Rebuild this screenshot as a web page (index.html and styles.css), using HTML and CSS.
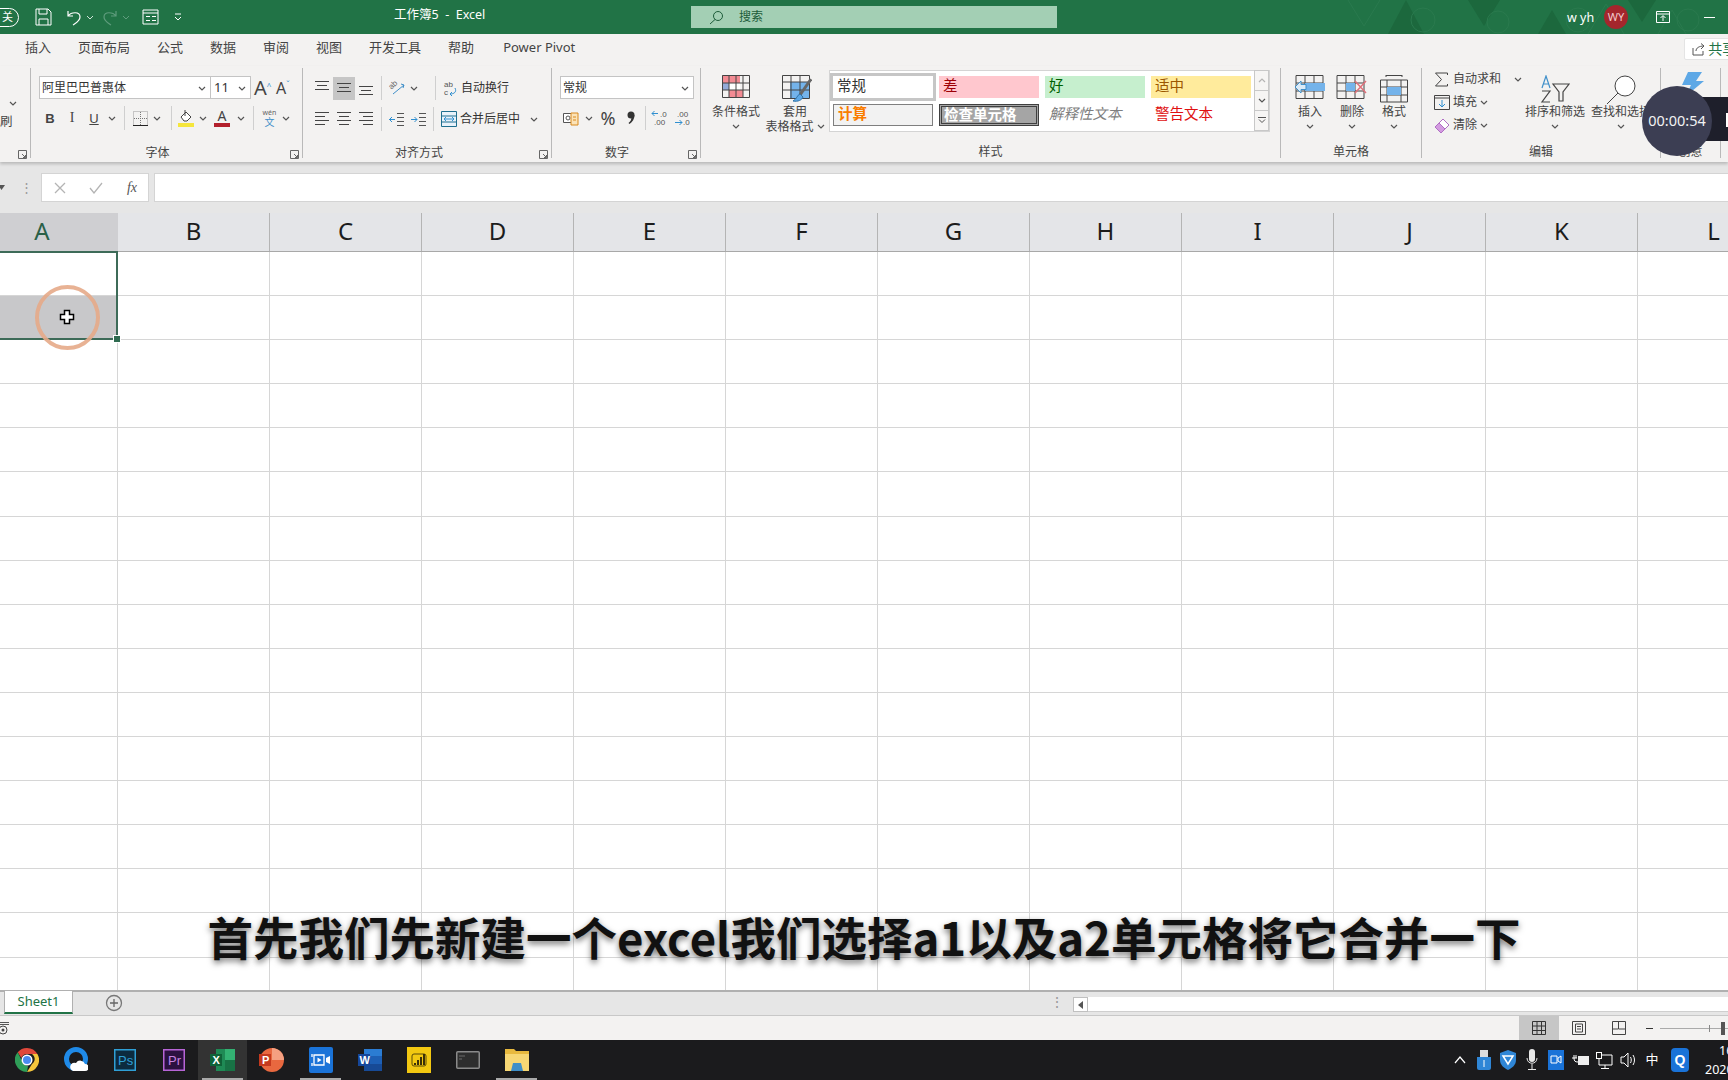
FILE: index.html
```html
<!DOCTYPE html>
<html lang="zh-CN">
<head>
<meta charset="utf-8">
<title>工作簿5 - Excel</title>
<link rel="stylesheet" href="styles.css">
</head>
<body>
<svg class="defs" width="0" height="0">
  <symbol id="chev" viewBox="0 0 8 5"><path d="M1 1l3 3 3-3" fill="none" stroke="#555" stroke-width="1.2"/></symbol>
  <symbol id="launch" viewBox="0 0 9 9"><path d="M.5 8.500V.5h8v8z M4 4l3.500 3.500M7.500 5v2.500H5" fill="none" stroke="#666"/></symbol>
  <symbol id="alt" viewBox="0 0 16 16"><path d="M1 1.500h14M3 5.500h10M1 9.500h14" stroke="#444" fill="none"/></symbol>
  <symbol id="alc" viewBox="0 0 16 16"><path d="M1 3.500h14M3 7.500h10M1 11.500h14" stroke="#444" fill="none"/></symbol>
  <symbol id="alb" viewBox="0 0 16 16"><path d="M1 6.500h14M3 10.500h10M1 14.500h14" stroke="#444" fill="none"/></symbol>
  <symbol id="left" viewBox="0 0 16 16"><path d="M1 1.500h14M1 5.500h10M1 9.500h14M1 13.500h10" stroke="#444" fill="none"/></symbol>
  <symbol id="center" viewBox="0 0 16 16"><path d="M1 1.500h14M3 5.500h10M1 9.500h14M3 13.500h10" stroke="#444" fill="none"/></symbol>
  <symbol id="right" viewBox="0 0 16 16"><path d="M1 1.500h14M5 5.500h10M1 9.500h14M5 13.500h10" stroke="#444" fill="none"/></symbol>
</svg>

<header class="titlebar">
  <svg class="pattern" width="440" height="34" viewBox="0 0 440 34">
    <g fill="#1c683d"><path d="M100 34l18-34 18 34z"/><path d="M180 0l16 26 16-26z"/><path d="M250 34l14-24 14 24z"/><path d="M340 0l14 22 14-22z"/></g>
    <g fill="none" stroke="#2a7a4e"><circle cx="135" cy="20" r="12"/><circle cx="210" cy="22" r="11"/><circle cx="290" cy="20" r="12"/><circle cx="400" cy="20" r="11"/><path d="M60 0l16 26 16-26M300 34l18-30 18 30M370 34l14-24 14 24"/></g>
  </svg>
  <div class="qat">
    <span class="autosave">关</span>
    <svg width="17" height="18" viewBox="0 0 17 18"><path d="M1 1h12l3 3v13H1zM4 1v5h8V1M4 17v-6h9v6" fill="none" stroke="#fff"/></svg>
    <svg class="q-undo" width="16" height="18" viewBox="0 0 16 18"><path d="M2 3v5h5M2 8c3-4 12-5 12 1 0 4-4 6-7 8" fill="none" stroke="#fff" stroke-width="1.2"/></svg>
    <svg class="q-ch" width="8" height="5"><path d="M1 1l3 3 3-3" fill="none" stroke="#cfe3d8"/></svg>
    <svg class="q-redo" width="16" height="18" viewBox="0 0 16 18"><path d="M14 3v5H9M14 8C11 4 2 3 2 9c0 4 4 6 7 8" fill="none" stroke="#5f9c7d" stroke-width="1.2"/></svg>
    <svg class="q-ch" width="8" height="5"><path d="M1 1l3 3 3-3" fill="none" stroke="#5f9c7d"/></svg>
    <svg class="q-form" width="17" height="16" viewBox="0 0 17 16"><path d="M1 1h15v14H1zM1 4h15M4 7.500h4M10 7.500h4M4 11.500h4M10 11.500h4" fill="none" stroke="#fff"/></svg>
    <svg class="q-custom" width="8" height="8" viewBox="0 0 8 8"><path d="M1 1h6M1 4l3 3 3-3" fill="none" stroke="#fff"/></svg>
  </div>
  <div class="doc-title">工作簿5&nbsp; -&nbsp; Excel</div>
  <div class="search">
    <svg width="15" height="15" viewBox="0 0 15 15"><circle cx="9" cy="6" r="4.500" fill="none" stroke="#1d5c3a"/><path d="M6 9.500L1 14" stroke="#1d5c3a"/></svg>
    <span>搜索</span>
  </div>
  <div class="account">w yh</div>
  <div class="avatar">WY</div>
  <svg class="win-opt" width="14" height="12" viewBox="0 0 14 12"><path d="M.5.500h13v11H.5zM.5 3h13M7 10V5M4.500 7L7 4.500 9.500 7" fill="none" stroke="#fff"/></svg>
  <div class="win-min"></div>
</header>

<nav class="tabs">
  <span class="tab">插入</span>
  <span class="tab">页面布局</span>
  <span class="tab">公式</span>
  <span class="tab">数据</span>
  <span class="tab">审阅</span>
  <span class="tab">视图</span>
  <span class="tab">开发工具</span>
  <span class="tab">帮助</span>
  <span class="tab tab-pivot">Power Pivot</span>
  <span class="share">
    <svg width="13" height="13" viewBox="0 0 13 13"><path d="M1 5v7h10V8M4 8c0-3 3-5 8-5M9 .5L12 3 9 6" fill="none" stroke="#555"/></svg>
    <b>共享</b>
  </span>
</nav>

<section class="ribbon">
  <div class="group g-clip">
    <div class="g-body">
      <svg class="clip-ch" width="8" height="5"><use href="#chev"/></svg>
      <span class="clip-txt">刷</span>
    </div>
    <div class="g-label"><i></i><span></span><svg width="9" height="9"><use href="#launch"/></svg></div>
  </div>

  <div class="group g-font">
    <div class="g-body">
      <div class="font-row1">
        <div class="combo combo-name"><span>阿里巴巴普惠体</span><svg width="8" height="5"><use href="#chev"/></svg></div>
        <div class="combo combo-size"><span>11</span><svg width="8" height="5"><use href="#chev"/></svg></div>
        <span class="grow">A<sup>^</sup></span>
        <span class="shrink">A<sup>ˇ</sup></span>
      </div>
      <div class="font-row2">
        <b class="tb tb-b">B</b>
        <em class="tb tb-i">I</em>
        <u class="tb tb-u">U</u>
        <svg width="8" height="5"><use href="#chev"/></svg>
        <i class="sep"></i>
        <svg width="15" height="15" viewBox="0 0 15 15"><path d="M.5.500h14v14H.5z" fill="none" stroke="#999" stroke-dasharray="1 1"/><path d="M7.500 1v13M1 7.500h13" stroke="#777" stroke-dasharray="1 1"/><path d="M0 14.500h15" stroke="#222"/></svg>
        <svg width="8" height="5"><use href="#chev"/></svg>
        <i class="sep"></i>
        <svg class="fill-ic" width="16" height="18" viewBox="0 0 16 18"><path d="M3 8l5-5 5 5-4 4H6z" fill="#fff" stroke="#444"/><path d="M7 1v6" stroke="#444"/><path d="M0 14h16v4H0z" fill="#f5e63c"/></svg>
        <svg width="8" height="5"><use href="#chev"/></svg>
        <span class="fcolor">A</span>
        <svg width="8" height="5"><use href="#chev"/></svg>
        <i class="sep"></i>
        <span class="wen"><small>wén</small><span>文</span></span>
        <svg width="8" height="5"><use href="#chev"/></svg>
      </div>
    </div>
    <div class="g-label"><i></i><span>字体</span><svg width="9" height="9"><use href="#launch"/></svg></div>
  </div>

  <div class="group g-align">
    <div class="g-body">
      <div class="align-row1">
        <svg width="16" height="16"><use href="#alt"/></svg>
        <span class="hl"><svg width="16" height="16"><use href="#alc"/></svg></span>
        <svg width="16" height="16"><use href="#alb"/></svg>
        <i class="sep"></i>
        <svg width="18" height="18" viewBox="0 0 18 18"><text x="2" y="9" transform="rotate(-45 5 8)" class="svg-t orient">ab</text><path d="M5 15L16 6M13 5l3 1-1 3" stroke="#3f8fc9" fill="none"/></svg>
        <svg width="8" height="5"><use href="#chev"/></svg>
        <i></i>
        <i class="sep"></i>
        <span class="cmd"><svg width="15" height="18" viewBox="0 0 15 18"><text x="1" y="8" class="svg-t wrapt">ab</text><text x="1" y="16" class="svg-t wrapt">c</text><path d="M12 9c2 4-1 6-5 6M9 13l-2 2 2 2" fill="none" stroke="#2f8fd0"/></svg><span>自动换行</span></span>
      </div>
      <div class="align-row2">
        <svg width="16" height="16"><use href="#left"/></svg>
        <svg width="16" height="16"><use href="#center"/></svg>
        <svg width="16" height="16"><use href="#right"/></svg>
        <i class="sep"></i>
        <svg width="15" height="15" viewBox="0 0 15 15"><path d="M8 1.500h7M8 5.500h7M8 9.500h7M8 13.500h7" stroke="#555"/><path d="M6 7.500H0M3 5L.5 7.500 3 10" fill="none" stroke="#2f8fd0"/></svg>
        <svg width="15" height="15" viewBox="0 0 15 15"><path d="M8 1.500h7M8 5.500h7M8 9.500h7M8 13.500h7" stroke="#555"/><path d="M0 7.500h6M3.500 5L6 7.500 3.500 10" fill="none" stroke="#2f8fd0"/></svg>
        <i class="sep"></i>
        <span class="cmd"><svg width="16" height="16" viewBox="0 0 16 16"><path d="M.5.500h15v15H.5z" fill="#e8f2fa" stroke="#1f6f8f"/><path d="M.5 5h15M.5 11h15" stroke="#1f6f8f"/><path d="M3 8h10M5 6L3 8l2 2M11 6l2 2-2 2" fill="none" stroke="#2f8fd0"/></svg><span>合并后居中</span><svg class="cmd-ch" width="8" height="5"><use href="#chev"/></svg></span>
      </div>
    </div>
    <div class="g-label"><i></i><span>对齐方式</span><svg width="9" height="9"><use href="#launch"/></svg></div>
  </div>

  <div class="group g-num">
    <div class="g-body">
      <div class="combo combo-num"><span>常规</span><svg width="8" height="5"><use href="#chev"/></svg></div>
      <div class="num-row2">
        <svg width="17" height="15" viewBox="0 0 17 15"><path d="M.5 2.500h12v9H.5z" fill="#fff" stroke="#555"/><circle cx="5" cy="7" r="2" fill="none" stroke="#555"/><path d="M8 2h7v12H8z" fill="#fbe3b8" stroke="#d98a1f"/><path d="M10 6h3M10 9h3" stroke="#d98a1f"/></svg>
        <svg width="8" height="5"><use href="#chev"/></svg>
        <span class="pct">%</span>
        <svg width="8" height="14" viewBox="0 0 8 14"><circle cx="4" cy="4" r="3.500" fill="#333"/><path d="M7.500 4c0 4-2 7-5 9l-1-1c2-1.500 3-3.500 3-6z" fill="#333"/></svg>
        <i class="sep"></i>
        <svg width="18" height="18" viewBox="0 0 18 18"><path d="M7 4.500H1M3.500 2L1 4.500 3.500 7" fill="none" stroke="#2f8fd0"/><text x="9" y="7.500" class="svg-t dect">.0</text><text x="3" y="16" class="svg-t dect">.00</text></svg>
        <svg width="18" height="18" viewBox="0 0 18 18"><text x="3" y="7.500" class="svg-t dect">.00</text><path d="M1 13.500h7M5.500 11L8 13.500 5.500 16" fill="none" stroke="#2f8fd0"/><text x="9" y="16" class="svg-t dect">.0</text></svg>
      </div>
    </div>
    <div class="g-label"><i></i><span>数字</span><svg width="9" height="9"><use href="#launch"/></svg></div>
  </div>

  <div class="group g-style">
    <div class="g-body style-body">
      <div class="big big-cond">
        <span class="big-ico"><svg width="28" height="23" viewBox="0 0 28 23"><path d="M0 0h18v8H0z" fill="#f28b93"/><path d="M7 8h11v7H7z" fill="#fff"/><path d="M7 8H0v7h7z" fill="#93aad8"/><path d="M7 15h14v8H7z" fill="#f28b93"/><path d="M.5.500h27v22H.5zM.5 8h27M.5 15h27M7 0v23M14 0v23M21 0v23" fill="none" stroke="#444"/></svg></span>
        <span>条件格式</span>
        <svg class="big-ch" width="8" height="5"><use href="#chev"/></svg>
      </div>
      <div class="big big-table">
        <span class="big-ico"><svg width="30" height="28" viewBox="0 0 30 28"><path d="M8 7h19v16H8z" fill="#74b3ea"/><path d="M.5.500h27v23H.5zM.5 7h27M.5 15h27M9 0v24M18 0v24" fill="none" stroke="#444"/><path d="M29 4L18 20" stroke="#666" stroke-width="3"/><path d="M18 19c-3 1-3 5-7 7 5 1 9-1 10-4z" fill="#5da8e6" stroke="#2f73a8"/></svg></span>
        <span>套用</span>
        <span class="line2">表格格式<svg width="8" height="5"><use href="#chev"/></svg></span>
      </div>
      <div class="gallery">
        <div class="g-cells">
          <span class="st st-normal">常规</span>
          <span class="st st-bad">差</span>
          <span class="st st-good">好</span>
          <span class="st st-neutral">适中</span>
          <span class="st st-calc">计算</span>
          <span class="st st-check">检查单元格</span>
          <span class="st st-note">解释性文本</span>
          <span class="st st-warn">警告文本</span>
        </div>
        <div class="g-scroll">
          <span><svg width="8" height="5" class="up"><use href="#chev"/></svg></span>
          <span><svg width="8" height="5"><use href="#chev"/></svg></span>
          <span><svg width="8" height="7" viewBox="0 0 8 7"><path d="M0 .5h8M1 2.500l3 3 3-3" fill="none" stroke="#555"/></svg></span>
        </div>
      </div>
    </div>
    <div class="g-label"><i></i><span>样式</span><i></i></div>
  </div>

  <div class="group g-cell">
    <div class="g-body style-body">
      <div class="big big-42">
        <span class="big-ico"><svg width="32" height="24" viewBox="0 0 32 24"><path d="M2 .5h27v23H2zM2 8h27M2 16h27M11 0v24M20 0v24" fill="none" stroke="#444"/><path d="M11 8h20v8H11z" fill="#74b3ea"/><path d="M12 9.500H7V6l-6 6 6 6v-3.500h5z" fill="#dcebf7" stroke="#3f8fc9"/></svg></span>
        <span>插入</span>
        <svg class="big-ch" width="8" height="5"><use href="#chev"/></svg>
      </div>
      <div class="big big-42">
        <span class="big-ico"><svg width="32" height="24" viewBox="0 0 32 24"><path d="M1 .5h27v23H1zM1 8h27M1 16h27M10 0v24M19 0v24" fill="none" stroke="#444"/><path d="M10 8h9v8h-9z" fill="#74b3ea"/><path d="M19 6l11 12M30 6L19 18" stroke="#e0707a" stroke-width="1.500"/></svg></span>
        <span>删除</span>
        <svg class="big-ch" width="8" height="5"><use href="#chev"/></svg>
      </div>
      <div class="big big-42">
        <span class="big-ico"><svg width="28" height="28" viewBox="0 0 28 28"><path d="M6 .5h16M6 0v2M22 0v2" stroke="#444" fill="none"/><path d="M.5 5h27v22H.5zM.5 12h27M.5 20h27M7 5v22M21 5v22" fill="none" stroke="#444"/><path d="M7 12h14v8H7z" fill="#74b3ea"/></svg></span>
        <span>格式</span>
        <svg class="big-ch" width="8" height="5"><use href="#chev"/></svg>
      </div>
    </div>
    <div class="g-label"><i></i><span>单元格</span><i></i></div>
  </div>

  <div class="group g-edit">
    <div class="g-body style-body">
      <div class="edit-stack">
        <div class="edit-row"><svg width="15" height="15" viewBox="0 0 15 15"><path d="M13 3V1H1l6 6.500L1 14h12v-2" fill="none" stroke="#444"/></svg><span>自动求和</span><svg class="ch-far" width="8" height="5"><use href="#chev"/></svg></div>
        <div class="edit-row"><svg width="16" height="15" viewBox="0 0 16 15"><path d="M.5.500h15v14H.5zM.5 3h15" fill="none" stroke="#444"/><path d="M8 5v7M5 9l3 3 3-3" fill="none" stroke="#2f8fd0"/></svg><span>填充</span><svg width="8" height="5"><use href="#chev"/></svg></div>
        <div class="edit-row"><svg width="16" height="16" viewBox="0 0 16 16"><path d="M9 1l6 6-8 8-6-6z" fill="#fff" stroke="#b06fc4"/><path d="M5 5l6 6-4 4-6-6z" fill="#d39be0" stroke="#b06fc4"/></svg><span>清除</span><svg width="8" height="5"><use href="#chev"/></svg></div>
      </div>
      <div class="big big-66">
        <span class="big-ico"><svg width="30" height="28" viewBox="0 0 30 28"><path d="M2 13l4-12 4 12M3.500 9h5" fill="none" stroke="#3f8fc9" stroke-width="1.200"/><path d="M2 16h8L2 27h8" fill="none" stroke="#444" stroke-width="1.200"/><path d="M13 9h16l-6 8v9h-4v-9z" fill="none" stroke="#444" stroke-width="1.200"/></svg></span>
        <span>排序和筛选</span>
        <svg class="big-ch" width="8" height="5"><use href="#chev"/></svg>
      </div>
      <div class="big big-66">
        <span class="big-ico"><svg width="30" height="30" viewBox="0 0 30 30"><circle cx="19" cy="11" r="10" fill="#fff" stroke="#444"/><path d="M12 18L1 29" stroke="#444"/></svg></span>
        <span>查找和选择</span>
        <svg class="big-ch" width="8" height="5"><use href="#chev"/></svg>
      </div>
    </div>
    <div class="g-label"><i></i><span>编辑</span><i></i></div>
  </div>

  <div class="group g-idea">
    <div class="g-body">
      <svg class="idea" width="24" height="24" viewBox="0 0 24 24"><path d="M8 0h14l-6 9h8L6 24l5-11H2z" fill="#5da8e6"/></svg>
    </div>
    <div class="g-label"><i></i><span>创意</span><i></i></div>
  </div>
</section>

<section class="formula">
  <svg class="name-ch" width="8" height="5"><path d="M0 0h7L3.500 5z" fill="#555"/></svg>
  <span class="grip">⋮</span>
  <div class="fx-box">
    <svg width="12" height="12" viewBox="0 0 12 12"><path d="M1 1l10 10M11 1L1 11" stroke="#b4b4b4" stroke-width="1.300"/></svg>
    <svg width="14" height="12" viewBox="0 0 14 12"><path d="M1 6l4 5 8-10" fill="none" stroke="#b4b4b4" stroke-width="1.300"/></svg>
    <em>fx</em>
  </div>
  <div class="fx-input"></div>
</section>

<main class="sheet">
  <div class="col-head">
    <span class="ch-sel">A</span><span>B</span><span>C</span><span>D</span><span>E</span><span>F</span><span>G</span><span>H</span><span>I</span><span>J</span><span>K</span><span>L</span>
  </div>
  <div class="cells">
    <div class="r"><i></i><i></i><i></i><i></i><i></i><i></i><i></i><i></i><i></i><i></i><i></i><i></i></div>
    <div class="r"><i class="a2"></i><i></i><i></i><i></i><i></i><i></i><i></i><i></i><i></i><i></i><i></i><i></i></div>
    <div class="r"><i></i><i></i><i></i><i></i><i></i><i></i><i></i><i></i><i></i><i></i><i></i><i></i></div>
    <div class="r"><i></i><i></i><i></i><i></i><i></i><i></i><i></i><i></i><i></i><i></i><i></i><i></i></div>
    <div class="r"><i></i><i></i><i></i><i></i><i></i><i></i><i></i><i></i><i></i><i></i><i></i><i></i></div>
    <div class="r"><i></i><i></i><i></i><i></i><i></i><i></i><i></i><i></i><i></i><i></i><i></i><i></i></div>
    <div class="r"><i></i><i></i><i></i><i></i><i></i><i></i><i></i><i></i><i></i><i></i><i></i><i></i></div>
    <div class="r"><i></i><i></i><i></i><i></i><i></i><i></i><i></i><i></i><i></i><i></i><i></i><i></i></div>
    <div class="r"><i></i><i></i><i></i><i></i><i></i><i></i><i></i><i></i><i></i><i></i><i></i><i></i></div>
    <div class="r"><i></i><i></i><i></i><i></i><i></i><i></i><i></i><i></i><i></i><i></i><i></i><i></i></div>
    <div class="r"><i></i><i></i><i></i><i></i><i></i><i></i><i></i><i></i><i></i><i></i><i></i><i></i></div>
    <div class="r"><i></i><i></i><i></i><i></i><i></i><i></i><i></i><i></i><i></i><i></i><i></i><i></i></div>
    <div class="r"><i></i><i></i><i></i><i></i><i></i><i></i><i></i><i></i><i></i><i></i><i></i><i></i></div>
    <div class="r"><i></i><i></i><i></i><i></i><i></i><i></i><i></i><i></i><i></i><i></i><i></i><i></i></div>
    <div class="r"><i></i><i></i><i></i><i></i><i></i><i></i><i></i><i></i><i></i><i></i><i></i><i></i></div>
    <div class="r"><i></i><i></i><i></i><i></i><i></i><i></i><i></i><i></i><i></i><i></i><i></i><i></i></div>
    <div class="r"><i></i><i></i><i></i><i></i><i></i><i></i><i></i><i></i><i></i><i></i><i></i><i></i></div>
    <div class="selection"><span class="handle"></span></div>
    <div class="ring"></div>
    <svg class="cursor" width="16" height="16" viewBox="0 0 16 16"><path d="M5.500 1.500h5v4h4v5h-4v4h-5v-4h-4v-5h4z" fill="#fff" stroke="#000" stroke-width="1.500"/></svg>
  </div>
</main>

<section class="sheetbar">
  <span class="sheet-tab">Sheet1</span>
  <svg class="add" width="18" height="18" viewBox="0 0 18 18"><circle cx="9" cy="9" r="7.500" fill="none" stroke="#777" stroke-width="1.300"/><path d="M9 5v8M5 9h8" stroke="#666" stroke-width="1.300"/></svg>
  <span class="bar-grip">⋮</span>
  <span class="sc-left"><svg width="5" height="8" viewBox="0 0 5 8"><path d="M5 0v8L0 4z" fill="#555"/></svg></span>
  <span class="sc-track"></span>
</section>

<footer class="status">
  <svg class="macro" width="9" height="14" viewBox="0 0 9 14"><path d="M0 1.500h9M0 3.500h9" stroke="#555"/><circle cx="3" cy="9" r="4" fill="none" stroke="#444"/><circle cx="3" cy="9" r="1.500" fill="#444"/></svg>
  <span class="view view-on"><svg width="14" height="14" viewBox="0 0 14 14"><path d="M.5.500h13v13H.5zM.5 5h13M.5 9.500h13M5 0v14M9.500 0v14" fill="none" stroke="#333"/></svg></span>
  <span class="view"><svg width="14" height="14" viewBox="0 0 14 14"><path d="M.5.500h13v13H.5zM3.500 3h7v8h-7zM5 5.500h4M5 8h4" fill="none" stroke="#444"/></svg></span>
  <span class="view"><svg width="14" height="14" viewBox="0 0 14 14"><path d="M.5.500h13v13H.5zM6.500 0v8H.5M7 8h6" fill="none" stroke="#444"/></svg></span>
  <span class="zoom-min"></span>
  <span class="slider"><i class="tick"></i><i class="thumb"></i></span>
</footer>

<nav class="taskbar">
  <div class="apps">
    <span class="app"><svg width="24" height="24" viewBox="0 0 24 24"><path d="M12 0a12 12 0 0 1 10.400 6H12a6 6 0 0 0-5.600 4L2.700 4.300A12 12 0 0 1 12 0z" fill="#e0483b"/><path d="M22.400 6a12 12 0 0 1-10.400 18l5-8a6 6 0 0 0 0-10z" fill="#f5c63c"/><path d="M12 24A12 12 0 0 1 2.700 4.300L7.500 14a6 6 0 0 0 5.500 4z" fill="#2f9e58"/><circle cx="12" cy="12" r="5.500" fill="#fff"/><circle cx="12" cy="12" r="4" fill="#4a8bf0"/></svg></span>
    <span class="app"><svg width="24" height="26" viewBox="0 0 24 26"><circle cx="12" cy="12" r="9.500" fill="none" stroke="#1f8ae8" stroke-width="5"/><path d="M9 24h12a3.500 3.500 0 0 0 0-7 5 5 0 0 0-9-1 4 4 0 0 0-3 8z" fill="#fff"/></svg></span>
    <span class="app"><svg width="22" height="22" viewBox="0 0 22 22"><rect x=".75" y=".75" width="20.500" height="20.500" fill="#0c2b3f" stroke="#2f9fd6" stroke-width="1.500"/><text x="4" y="16" class="svg-t ps">Ps</text></svg></span>
    <span class="app"><svg width="22" height="22" viewBox="0 0 22 22"><rect x=".75" y=".75" width="20.500" height="20.500" fill="#2b1140" stroke="#b765d6" stroke-width="1.500"/><text x="5" y="16" class="svg-t pr">Pr</text></svg></span>
    <span class="app app-on"><svg width="25" height="24" viewBox="0 0 25 24"><path d="M6 1h19v22H6z" fill="#1f8a55"/><path d="M15 1h10v11H15z" fill="#33b172"/><path d="M15 12h10v11H15z" fill="#187245"/><rect y="6" width="12" height="12" fill="#0f6238"/><text x="2.500" y="16" class="svg-t xl">X</text></svg></span>
    <span class="app"><svg width="25" height="24" viewBox="0 0 25 24"><circle cx="13" cy="12" r="12" fill="#e8683f"/><path d="M13 12V0a12 12 0 0 1 12 12z" fill="#f5a081"/><rect y="6" width="12" height="12" fill="#c4391e"/><text x="3" y="16" class="svg-t xl">P</text></svg></span>
    <span class="app"><svg width="24" height="26" viewBox="0 0 24 26"><rect width="24" height="26" rx="2" fill="#1a73d8"/><path d="M5 8h10v10H5zM3 7v3M3 16v3" fill="none" stroke="#fff" stroke-width="1.300"/><path d="M8.500 10.500l4 2.500-4 2.500zM17 11l4-2v8l-4-2z" fill="#fff"/></svg></span>
    <span class="app"><svg width="24" height="24" viewBox="0 0 24 24"><path d="M6 1h18v22H6z" fill="#2b7cd3"/><path d="M6 8h18v8H6z" fill="#1d5fb5"/><path d="M6 16h18v7H6z" fill="#174a96"/><rect y="6" width="12" height="12" fill="#16479a"/><text x="1.500" y="16" class="svg-t xl">W</text></svg></span>
    <span class="app"><svg width="24" height="26" viewBox="0 0 24 26"><rect width="24" height="26" fill="#f2c811"/><rect x="5" y="7" width="14" height="12" rx="2" fill="none" stroke="#5a4a08"/><path d="M8 16v2M11 13v5M14 10v8M17 7v11" stroke="#3a3008" stroke-width="2"/></svg></span>
    <span class="app"><svg width="24" height="18" viewBox="0 0 24 18"><rect x=".75" y=".75" width="22.500" height="16.500" rx="1" fill="#2e2e2e" stroke="#8a8a8a" stroke-width="1.500"/><path d="M3 5h6M3 8h3" stroke="#6a6a6a"/></svg></span>
    <span class="app"><svg width="24" height="22" viewBox="0 0 24 22"><path d="M0 0h9l2 2h13v20H0z" fill="#e8b93e"/><path d="M0 5h24v17H0z" fill="#f7d774"/><path d="M8 14h8l2 8H6z" fill="#3f8fc9"/></svg></span>
  </div>
  <div class="tray">
    <span class="ti"><svg width="12" height="8" viewBox="0 0 12 8"><path d="M1 7l5-6 5 6" fill="none" stroke="#fff" stroke-width="1.200"/></svg></span>
    <span class="ti"><svg width="14" height="20" viewBox="0 0 14 20"><path d="M3 0h8v7H3z" fill="#ddd"/><path d="M0 7h14v11a2 2 0 0 1-2 2H2a2 2 0 0 1-2-2z" fill="#2f86d6"/><path d="M7 10v7" stroke="#fff"/></svg></span>
    <span class="ti"><svg width="16" height="20" viewBox="0 0 16 20"><path d="M8 0l8 3v7c0 5-4 8-8 10-4-2-8-5-8-10V3z" fill="#2f86d6"/><path d="M3 6h10L8 14z" fill="none" stroke="#fff" stroke-width="1.500"/></svg></span>
    <span class="ti"><svg width="12" height="22" viewBox="0 0 12 22"><rect x="3" width="6" height="13" rx="3" fill="#e8e8e8"/><path d="M1 9c0 7 10 7 10 0M6 15v5M2 20.500h8" fill="none" stroke="#e8e8e8"/></svg></span>
    <span class="ti"><svg width="16" height="20" viewBox="0 0 16 20"><rect width="16" height="20" fill="#1a73d8"/><path d="M3 6h6v7H3zM10 8l3-2v7l-3-2z" fill="none" stroke="#fff"/></svg></span>
    <span class="ti"><svg width="17" height="14" viewBox="0 0 17 14"><rect x="6" y="3" width="11" height="9" fill="#eee"/><path d="M0 5h5M2 2v3M4 2v3M2 5c0 3 1 4 4 4" fill="none" stroke="#fff"/></svg></span>
    <span class="ti"><svg width="17" height="17" viewBox="0 0 17 17"><path d="M3 3h13v10H3zM9 13v3M5 16.500h8" fill="none" stroke="#fff"/><rect x=".5" y=".5" width="5" height="6" fill="#1c1c1c" stroke="#fff"/></svg></span>
    <span class="ti"><svg width="16" height="16" viewBox="0 0 16 16"><path d="M1 5h3l4-4v14l-4-4H1z" fill="none" stroke="#fff"/><path d="M10.500 5c1 2 1 4 0 6M13 3c2 3 2 7 0 10" fill="none" stroke="#fff"/></svg></span>
    <span class="ti ti-zh">中</span>
    <span class="ti ti-q"><b>Q</b></span>
    <span class="clock"><span>16:12</span><span>2020/8/24</span></span>
  </div>
</nav>

<div class="subtitle">首先我们先新建一个excel我们选择a1以及a2单元格将它合并一下</div>
<div class="timer-bar"><i></i></div>
<div class="timer">00:00:54</div>
</body>
</html>
```
FILE: styles.css
```css
* { box-sizing: border-box; }
html, body { margin: 0; height: 100%; }
body {
  width: 1728px;
  height: 1080px;
  overflow: hidden;
  position: relative;
  display: flex;
  flex-direction: column;
  background: #fff;
  color: #444;
  font: 12px/1.2 "Noto Sans", "Noto Sans CJK SC", sans-serif;
}
.defs { position: absolute; }
svg { flex: none; display: block; }
i { font-style: normal; }
.svg-t { font-family: "Liberation Sans", sans-serif; }

/* title bar */
.titlebar {
  position: relative;
  flex: 0 0 34px;
  display: flex;
  align-items: center;
  background: #217346;
  color: #fff;
  overflow: hidden;
}
.pattern { position: absolute; right: 0; top: 0; }
.qat { display: flex; align-items: center; width: 394px; flex: none; position: relative; }
.autosave {
  margin-left: -10px;
  width: 29px; height: 19px;
  display: flex; align-items: center; justify-content: flex-end;
  padding-right: 5px;
  border: 1px solid #fff; border-radius: 10px;
  font-size: 11px;
}
.qat > svg:nth-child(2) { margin-left: 16px; }
.q-undo { margin-left: 14px; }
.q-ch { margin-left: 4px; }
.q-redo { margin-left: 8px; }
.q-form { margin-left: 12px; }
.q-custom { margin-left: 15px; }
.doc-title { width: 297px; flex: none; font-size: 12.500px; position: relative; padding-bottom: 6px; }
.search {
  position: relative;
  width: 366px; height: 22px; flex: none;
  display: flex; align-items: center; gap: 15px;
  padding-left: 18px;
  background: #a3cfb4;
  color: #1d5c3a;
}
.account { margin-left: 510px; width: 36px; flex: none; font-size: 12.500px; position: relative; }
.avatar {
  position: relative;
  width: 24px; height: 24px; flex: none;
  margin-left: 1px;
  border-radius: 50%;
  background: #a4262c;
  color: #f3c9cb;
  font-size: 11px;
  display: flex; align-items: center; justify-content: center;
}
.win-opt { position: relative; margin-left: 28px; }
.win-min { position: relative; width: 11px; height: 1px; margin-left: 34px; background: #fff; }

/* tabs */
.tabs {
  flex: 0 0 32px;
  display: flex;
  align-items: center;
  gap: 27px;
  padding: 0 0 4px 25px;
  background: #f3f2f1;
  font-size: 13px;
  color: #444;
  white-space: nowrap;
}
.tab-pivot { margin-left: 2px; }
.share {
  margin-left: 1082px;
  flex: none;
  width: 60px; height: 22px;
  margin-top: 2px;
  display: flex; align-items: center; gap: 3px;
  padding-left: 7px;
  background: #fff;
  border: 1px solid #e4e4e4;
  border-radius: 2px;
  color: #217346;
}
.share b { font-weight: 400; font-size: 14px; }

/* ribbon */
.ribbon {
  position: relative;
  flex: 0 0 96px;
  display: flex;
  padding-top: 2px;
  background: #f3f2f1;
  box-shadow: 0 2px 3px rgba(0, 0, 0, .2);
  z-index: 1;
}
.group {
  flex: none;
  height: 90px;
  display: flex;
  flex-direction: column;
  border-right: 1px solid #b9b9b9;
}
.g-body { height: 77px; }
.g-label {
  height: 13px;
  display: grid;
  grid-template-columns: 1fr auto 1fr;
  align-items: center;
  justify-items: center;
  line-height: 13px;
  color: #444;
}
.g-label svg { justify-self: end; margin-right: 3px; margin-top: 5px; }
.g-font .g-label > span { transform: translateX(-9px); }
.g-align .g-label > span { transform: translateX(-8px); }
.g-num .g-label > span { transform: translateX(-9px); }
.g-clip { width: 31px; }
.g-font { width: 272px; }
.g-align { width: 249px; }
.g-num { width: 149px; }
.g-style { width: 580px; }
.g-cell { width: 141px; }
.g-edit { width: 239px; }
.g-idea { width: 60px; }

.clip-ch { margin: 33px 0 0 9px; }
.clip-txt { display: block; margin-top: 8px; font-size: 12.500px; line-height: 16px; }

.sep { width: 1px; height: 24px; background: #cfcfcf; justify-self: center; display: block; }
.combo {
  height: 23px;
  display: flex; align-items: center; justify-content: space-between;
  padding: 1px 4px 0 2px;
  background: #fff;
  border: 1px solid #c4c4c4;
  color: #333;
}
.g-font .g-body, .g-align .g-body, .g-num .g-body { padding: 8px 0 0 8px; }

.font-row1 { display: flex; align-items: center; }
.combo-name { width: 172px; }
.combo-size { width: 41px; margin-left: -1px; font-size: 13px; padding-left: 3px; }
.grow { font-size: 20px; margin-left: 3px; width: 22px; line-height: 22px; white-space: nowrap; }
.shrink { font-size: 16px; width: 18px; line-height: 22px; white-space: nowrap; }
.grow sup, .shrink sup { font-size: 8px; color: #2f8fd0; vertical-align: 6px; line-height: 0; }
.font-row2 {
  margin-top: 7px;
  height: 24px;
  display: grid;
  grid-template-columns: 22px 22px 22px 13px 12px 20px 14px 14px 19px 12px 26px 11px 14px 19px 14px;
  align-items: center;
  justify-items: center;
}
.tb { font: 13px "Liberation Sans", sans-serif; color: #444; }
.tb-b { font-weight: 700; }
.tb-i { font-family: "Liberation Serif", serif; font-size: 14px; }
.fill-ic { margin-left: -4px; }
.fcolor {
  font-size: 14px; line-height: 14px;
  width: 16px; text-align: center;
  border-bottom: 4px solid #b3202c;
  color: #444;
}
.wen { display: flex; flex-direction: column; align-items: center; color: #3f8fc9; }
.wen small { font-size: 7px; line-height: 8px; height: 8px; color: #666; }
.wen span { font-size: 10px; line-height: 11px; height: 11px; }

.align-row1, .align-row2 { display: grid; align-items: center; justify-items: center; height: 23px; }
.align-row1 { grid-template-columns: 22px 22px 22px 8px 23px 11px 12px 8px auto; }
.align-row2 { grid-template-columns: 22px 22px 22px 8px 22px 22px 8px auto; margin-top: 8px; height: 24px; }
.hl { width: 22px; height: 23px; background: #c6c6c6; display: flex; align-items: center; justify-content: center; }
.cmd { display: flex; align-items: center; gap: 3px; justify-self: start; padding-left: 4px; white-space: nowrap; color: #333; }
.cmd-ch { margin-left: 7px; }
.orient { font-size: 8px; fill: #666; }
.wrapt { font-size: 8px; fill: #555; }
.dect { font-size: 8px; fill: #555; }

.combo-num { width: 134px; }
.num-row2 {
  margin-top: 7px;
  height: 24px;
  display: grid;
  grid-template-columns: 22px 14px 24px 21px 8px 22px 24px;
  align-items: center;
  justify-items: center;
}
.pct { font-size: 18px; line-height: 24px; color: #444; }

.style-body { display: flex; }
.g-style .style-body { padding-left: 5px; }
.big { display: flex; flex-direction: column; align-items: center; padding-top: 7px; line-height: 15px; color: #444; white-space: nowrap; flex: none; }
.big-ico { height: 29px; display: block; }
.big-ch { margin-top: 5px; }
.big-cond { width: 60px; }
.big-table { width: 58px; }
.big-table .big-ico { margin-left: 4px; }
.line2 { display: flex; align-items: center; gap: 3px; }
.big-42 { width: 42px; }
.big-66 { width: 66px; }
.g-cell .style-body { padding-left: 8px; }

.gallery {
  margin: 2px 0 0 5px;
  width: 441px; height: 62px;
  display: flex;
  background: #fff;
  border: 1px solid #d4d4d4;
}
.g-cells {
  width: 424px;
  padding: 5px 0 0 3px;
  display: grid;
  grid-template-columns: repeat(4, 100px);
  grid-auto-rows: 22px;
  gap: 6px;
}
.st { display: flex; align-items: center; padding: 0 0 2px 4px; font-size: 14.500px; white-space: nowrap; color: #333; }
.st-normal { box-shadow: 0 0 0 3px #c6c6c6; background: #fff; }
.st-bad { background: #ffc7ce; color: #9c0006; }
.st-good { background: #c6efce; color: #006100; }
.st-neutral { background: #ffeb9c; color: #9c5700; }
.st-calc { background: #f2f2f2; border: 1px solid #7f7f7f; color: #fa7d00; font-weight: 700; }
.st-check { background: #a5a5a5; border: 3px double #3f3f3f; color: #fff; font-weight: 700; padding: 0 0 1px 2px; }
.st-note { color: #7f7f7f; font-style: italic; }
.st-warn { color: #e01010; }
.g-scroll { width: 15px; margin-left: 1px; display: flex; flex-direction: column; }
.g-scroll span { flex: 1; display: flex; align-items: center; justify-content: center; border: 1px solid #c8c8c8; margin-top: -1px; background: #f6f5f4; }
.up { transform: rotate(180deg); opacity: .4; }

.edit-stack { width: 100px; padding-left: 12px; flex: none; }
.edit-row { height: 23px; display: flex; align-items: center; gap: 3px; white-space: nowrap; color: #444; width: 96px; font-size: 12px; }
.ch-far { margin-left: 10px; }
.edit-row svg:first-child { width: 16px; }
.idea { margin: 4px 0 0 19px; }

/* formula */
.formula {
  flex: 0 0 51px;
  display: flex;
  align-items: flex-start;
  padding-top: 11px;
  background: #e6e6e6;
}
.name-ch { margin-top: 12px; margin-left: -2px; }
.grip { width: 30px; text-align: center; color: #999; font-size: 13px; line-height: 29px; margin-left: 5px; }
.fx-box {
  width: 108px; height: 29px; flex: none;
  display: grid; grid-template-columns: 36px 36px 36px; align-items: center; justify-items: center;
  background: #fff; border: 1px solid #d4d4d4;
}
.fx-box em { font: italic 14px "Liberation Serif", serif; color: #555; }
.fx-input { margin-left: 5px; flex: 1; height: 29px; background: #fff; border: 1px solid #d4d4d4; border-right: 0; }

/* sheet */
.sheet { flex: 0 0 777px; display: flex; flex-direction: column; overflow: hidden; }
.col-head {
  flex: 0 0 39px;
  display: grid;
  grid-template-columns: 118px repeat(11, 152px);
  background: #e4e5e8;
  border-bottom: 1px solid #a8a8a8;
}
.col-head span {
  display: flex; align-items: center; justify-content: center;
  padding-bottom: 3px;
  font-size: 24px; line-height: 34px;
  color: #1c1c1c;
  border-right: 1px solid #b4b4b4;
}
.col-head .ch-sel { background: #cfcfd2; color: #2a6048; padding-right: 34px; border-right: 0; border-bottom: 1px solid #3d6b58; margin-bottom: -1px; }
.cells { position: relative; flex: 1; overflow: hidden; }
.r { display: grid; grid-template-columns: 118px repeat(11, 152px); height: 44.100px; }
.r i { border-right: 1px solid #d6d6d6; border-bottom: 1px solid #d6d6d6; }
.r .a2 { background: #c8c8ca; }
.selection {
  position: absolute;
  left: -2px; top: -1px;
  width: 120px; height: 89px;
  border: 2px solid #3d6b58;
}
.handle { position: absolute; right: -4px; bottom: -4px; width: 6px; height: 6px; background: #2f6b50; outline: 1px solid #fff; }
.ring {
  position: absolute;
  left: 35px; top: 33px;
  width: 65px; height: 65px;
  border: 4px solid #e6aa88;
  border-radius: 50%;
  opacity: .9;
}
.cursor { position: absolute; left: 59px; top: 57px; }

/* sheet bar */
.sheetbar {
  flex: 0 0 25px;
  display: flex;
  align-items: flex-start;
  background: #e6e6e6;
  border-top: 2px solid #b0b0b0;
}
.sheet-tab {
  margin-left: 4px;
  width: 69px; height: 23px; flex: none;
  margin-top: -1px;
  display: flex; align-items: center; justify-content: center;
  background: #fff;
  border: 1px solid #b0b0b0; border-top: 0;
  border-bottom: 2px solid #217346;
  color: #217346;
  font-size: 13px;
}
.add { margin: 2px 0 0 32px; }
.bar-grip { margin-left: 926px; width: 16px; color: #999; font-size: 14px; line-height: 20px; text-align: center; }
.sc-left { margin: 5px 0 0 8px; width: 15px; height: 15px; display: flex; align-items: center; justify-content: center; background: #fff; border: 1px solid #c0c0c0; flex: none; }
.sc-track { margin-top: 5px; flex: 1; height: 15px; background: #fff; border-bottom: 1px solid #cfcfcf; }

/* status */
.status {
  flex: 0 0 25px;
  display: flex;
  align-items: center;
  background: #f3f2f1;
  border-top: 1px solid #c8c8c8;
}
.macro { margin-right: 1510px; }
.view { width: 40px; height: 24px; flex: none; display: flex; align-items: center; justify-content: center; }
.view-on { background: #c6c6c6; }
.zoom-min { width: 7px; height: 1px; background: #333; margin-left: 7px; flex: none; }
.slider { position: relative; margin-left: 7px; flex: 1; height: 1px; background: #aaa; }
.tick { position: absolute; left: 49px; top: -3px; width: 1px; height: 7px; background: #888; }
.thumb { position: absolute; left: 61px; top: -6px; width: 4px; height: 13px; background: #555; }

/* taskbar */
.taskbar { flex: 0 0 40px; display: flex; background: #1b1b1d; overflow: hidden; }
.apps { width: 541px; flex: none; padding-left: 2px; display: flex; }
.app { position: relative; width: 49px; flex: none; display: flex; align-items: center; justify-content: center; }
.app-on { background: #333; }
.app-on::after, .app:nth-child(7)::after, .app:nth-child(11)::after {
  content: ""; position: absolute; bottom: 0; left: 4px; right: 4px; height: 2px; background: #aaa;
}
.ps { font-size: 13px; fill: #2f9fd6; }
.pr { font-size: 13px; fill: #c583e0; }
.xl { font-size: 11px; font-weight: 700; fill: #fff; }
.tray { margin-left: 907px; display: flex; align-items: center; flex: none; color: #fff; }
.ti { width: 24px; display: flex; align-items: center; justify-content: center; flex: none; }
.ti-zh { font-size: 13px; }
.ti-q { width: 32px; }
.ti-q b { width: 18px; height: 24px; display: flex; align-items: center; justify-content: center; border-radius: 4px; background: #1a73d8; font: 700 14px "Liberation Sans", sans-serif; }
.clock { display: flex; flex-direction: column; padding-left: 9px; white-space: nowrap; line-height: 19px; font-size: 12.500px; }
.clock span:first-child { margin-left: 14px; }

/* overlays */
.subtitle {
  position: absolute;
  left: 0; right: 0; top: 905px;
  text-align: center;
  font: 700 45.500px/62px "Noto Sans CJK SC", sans-serif;
  color: #111;
  text-shadow: 0 3px 6px rgba(0, 0, 0, .55);
  white-space: nowrap;
}
.timer-bar {
  position: absolute; z-index: 2;
  left: 1700px; top: 97px; width: 28px; height: 44px;
  background: #1e1f2b;
}
.timer-bar i { position: absolute; right: 0; top: 16px; width: 2px; height: 14px; background: #fff; }
.timer {
  position: absolute; z-index: 3;
  left: 1642px; top: 86px;
  width: 70px; height: 70px;
  display: flex; align-items: center; justify-content: center;
  border-radius: 50%;
  background: #3c3e53;
  color: #f2f2f2;
  font-size: 14.500px;
}
```
